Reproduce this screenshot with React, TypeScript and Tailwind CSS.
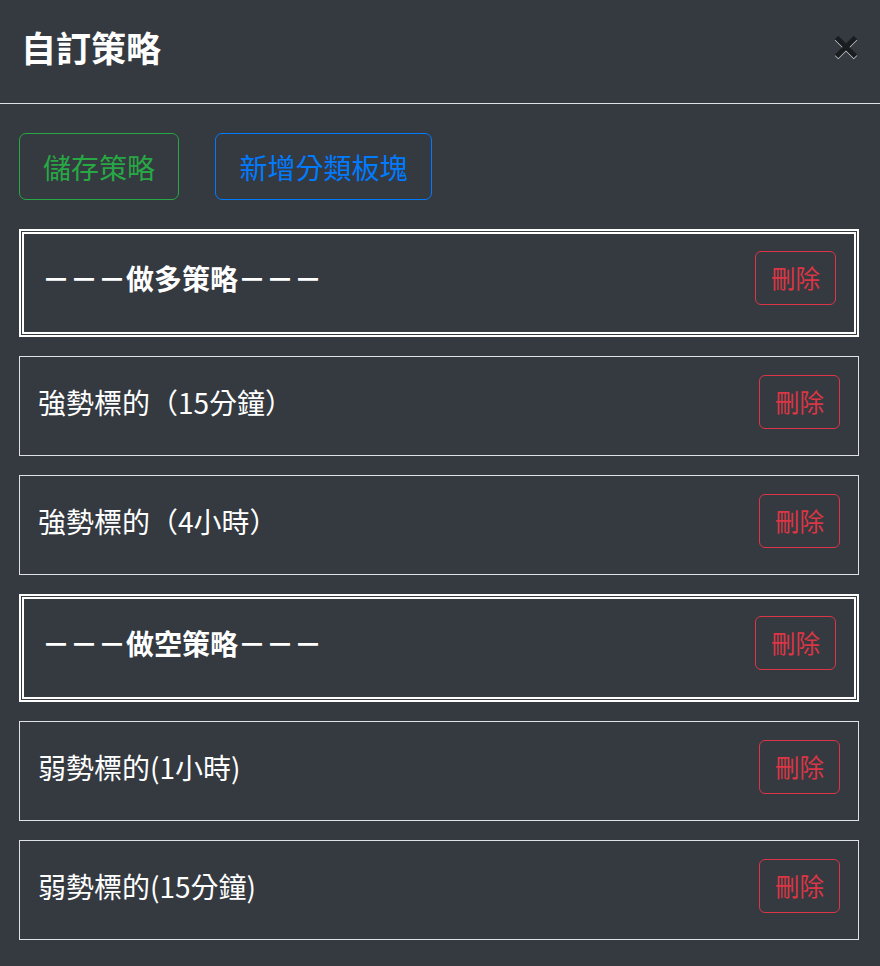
type Row = { label: string; heading?: boolean }

const rows: Row[] = [
    { label: "－－－做多策略－－－", heading: true },
    { label: "強勢標的（15分鐘）" },
    { label: "強勢標的（4小時）" },
    { label: "－－－做空策略－－－", heading: true },
    { label: "弱勢標的(1小時)" },
    { label: "弱勢標的(15分鐘)" },
]

function DeleteButton() {
    return (
        <button className="h-[54px] w-[81px] shrink-0 rounded-[6px] border border-[#dc3545] text-[24.5px] leading-none text-[#dc3545]">
            刪除
        </button>
    )
}

export default function App() {
    return (
        <div className="min-h-screen bg-[#343a40] text-white [font-family:'Noto_Sans_CJK_TC',sans-serif]">
            {/* HEADER */}
            <div className="flex h-[104px] items-start justify-between border-b border-[#dee2e6] pl-[21px] pr-[22px] pt-[23px]">
                <h5 className="text-[35px] font-bold leading-[48px]">自訂策略</h5>
                <button className="mt-[12px] [filter:drop-shadow(0_1px_0_#c8ccd0)]">
                    <svg width="24" height="24" viewBox="0 0 24 24">
                        <path d="M2.5 2.5 L21.5 21.5 M21.5 2.5 L2.5 21.5" stroke="#1a1d20" strokeWidth="5" />
                    </svg>
                </button>
            </div>

            {/* BODY */}
            <div className="pl-[19px] pr-[21px] pt-[29px] pb-[20px]">
                <div className="flex gap-[36px]">
                    <button className="h-[67px] w-[160px] rounded-[7px] border border-[#28a745] text-[28px] text-[#28a745]">
                        儲存策略
                    </button>
                    <button className="h-[67px] w-[217px] rounded-[7px] border border-[#007bff] text-[28px] text-[#007bff]">
                        新增分類板塊
                    </button>
                </div>

                <div className="mt-[29px] flex flex-col gap-[19px]">
                    {rows.map((r, i) =>
                        r.heading ? (
                            <div
                                key={i}
                                className="flex h-[108px] items-start justify-between border-[5px] border-double border-white pl-[18px] pr-[18px] pt-[17px]"
                            >
                                <span className="text-[28px] font-bold leading-[54px]">{r.label}</span>
                                <DeleteButton />
                            </div>
                        ) : (
                            <div
                                key={i}
                                className="flex h-[100px] items-start justify-between border border-[#dee2e6] pl-[18px] pr-[18px] pt-[18px]"
                            >
                                <span className="text-[28px] leading-[54px]">{r.label}</span>
                                <DeleteButton />
                            </div>
                        )
                    )}
                </div>
            </div>
        </div>
    )
}
